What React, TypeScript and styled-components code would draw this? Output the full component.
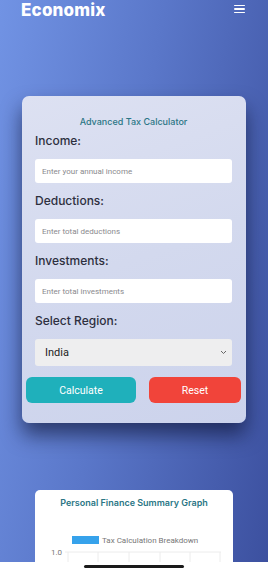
import React from "react";
import styled, { createGlobalStyle } from "styled-components";

const Global = createGlobalStyle`
  html, body { margin: 0; padding: 0; }
  body { width: 268px; height: 573px; overflow: hidden; font-family: Inter, "Open Sans", sans-serif; }
  * { box-sizing: border-box; }
`;

const Page = styled.div`
  position: relative;
  width: 268px;
  height: 573px;
  overflow: hidden;
  background: linear-gradient(100deg, #7193e4 0%, #5a77c9 45%, #3c509f 100%);
  display: flex;
  flex-direction: column;
`;

const Header = styled.header`
  display: flex;
  align-items: center;
  justify-content: space-between;
  height: 20px;
  padding: 0 23px 0 21px;
`;

const Logo = styled.div`
  font-family: Inter, sans-serif;
  font-weight: 800;
  font-size: 17px;
  line-height: 20px;
  color: #ffffff;
  letter-spacing: 0.2px;
`;

const Burger = styled.div`
  display: flex;
  flex-direction: column;
  gap: 2px;
  width: 11px;
  margin-top: -2px;
  span {
    display: block;
    height: 1.6px;
    background: #fff;
    border-radius: 1px;
  }
`;

const Card = styled.section`
  margin: 76px 22px 0;
  padding: 20px 14px 20px 13px;
  border-radius: 7px;
  background: linear-gradient(160deg, #dde1f2 0%, #d3d9ee 50%, #ccd3ec 100%);
  box-shadow: 0 12px 20px rgba(10, 15, 45, 0.6);
  display: flex;
  flex-direction: column;
`;

const Title = styled.h2`
  margin: 0;
  text-align: center;
  font-family: Inter, sans-serif;
  font-weight: 500;
  font-size: 9px;
  line-height: 12px;
  color: #2b7685;
`;

const Label = styled.label<{ $first?: boolean }>`
  display: block;
  margin-top: ${(p) => (p.$first ? "5px" : "10px")};
  font-family: Inter, sans-serif;
  font-weight: 500;
  font-size: 12px;
  line-height: 16px;
  color: #2d2f3e;
`;

const Input = styled.input`
  display: block;
  width: 100%;
  margin-top: 10px;
  height: 24px;
  border: none;
  border-radius: 3px;
  background: #fff;
  padding: 0 7px;
  font-family: Roboto, sans-serif;
  font-size: 8px;
  color: #333;
  outline: none;
  &::placeholder { color: #8a8a8e; font-family: Roboto, sans-serif; }
`;

const SelectBox = styled.div`
  margin-top: 10px;
  height: 27px;
  border-radius: 3px;
  background: #eeeeef;
  display: flex;
  align-items: center;
  justify-content: space-between;
  padding: 0 5px 0 10px;
  font-family: Roboto, sans-serif;
  font-size: 11px;
  color: #222;
`;

const Buttons = styled.div`
  margin: 11px -9px 0;
  display: flex;
  justify-content: space-between;
`;

const Btn = styled.button<{ $bg: string; $w: number }>`
  width: ${(p) => p.$w}px;
  height: 26px;
  border: none;
  border-radius: 6px;
  background: ${(p) => p.$bg};
  color: #fff;
  font-family: Roboto, sans-serif;
  font-size: 10.5px;
  padding: 0;
`;

const GraphCard = styled.section`
  margin: 67px 35px 0;
  height: 100px;
  background: #fff;
  border-radius: 5px;
  padding-top: 7px;
  display: flex;
  flex-direction: column;
  align-items: center;
`;

const GraphTitle = styled.h3`
  margin: 0;
  font-family: Inter, sans-serif;
  font-weight: 600;
  font-size: 9px;
  line-height: 12px;
  color: #2b7685;
`;

const HomeBar = styled.div`
  position: absolute;
  left: 0;
  right: 0;
  bottom: 0;
  height: 11px;
  background: #fff;
  display: flex;
  justify-content: center;
  padding-top: 3px;
  &::after {
    content: "";
    width: 100px;
    height: 3px;
    border-radius: 2px;
    background: #1a1a1a;
  }
`;

export default function App() {
  return (
    <>
      <Global />
      <Page>
        <Header>
          <Logo>Economix</Logo>
          <Burger>
            <span />
            <span />
            <span />
          </Burger>
        </Header>
        <Card>
          <Title>Advanced Tax Calculator</Title>
          <Label $first>Income:</Label>
          <Input placeholder="Enter your annual income" />
          <Label>Deductions:</Label>
          <Input placeholder="Enter total deductions" />
          <Label>Investments:</Label>
          <Input placeholder="Enter total investments" />
          <Label>Select Region:</Label>
          <SelectBox>
            <span>India</span>
            <svg width="7" height="5" viewBox="0 0 7 5">
              <path d="M1 1 L3.5 3.5 L6 1" fill="none" stroke="#666" strokeWidth="1" />
            </svg>
          </SelectBox>
          <Buttons>
            <Btn $bg="#1fb0bb" $w={110}>Calculate</Btn>
            <Btn $bg="#f1443a" $w={92}>Reset</Btn>
          </Buttons>
        </Card>
        <GraphCard>
          <GraphTitle>Personal Finance Summary Graph</GraphTitle>
          <svg width="198" height="60" viewBox="0 0 198 60">
            <rect x="37" y="27" width="27" height="8" fill="#36a2eb" />
            <text x="67" y="34" fontFamily="Roboto, sans-serif" fontSize="8" fill="#777">
              Tax Calculation Breakdown
            </text>
            <text x="16" y="46" fontFamily="Roboto, sans-serif" fontSize="8" fill="#777">1.0</text>
            <line x1="30" y1="43" x2="186" y2="43" stroke="#ececec" strokeWidth="1" />
            {[33, 63, 94, 125, 155, 185].map((x) => (
              <line key={x} x1={x} y1="43" x2={x} y2="60" stroke="#ececec" strokeWidth="1" />
            ))}
          </svg>
        </GraphCard>
        <HomeBar />
      </Page>
    </>
  );
}
